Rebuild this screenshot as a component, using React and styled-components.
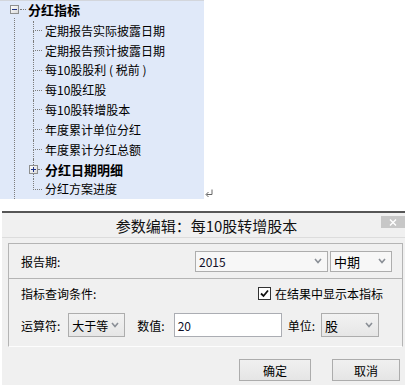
import React from 'react';
import styled, { createGlobalStyle } from 'styled-components';

const GlobalStyle = createGlobalStyle`
  html, body {
    margin: 0;
    padding: 0;
    background: #fff;
  }
  body {
    font-family: "Noto Sans CJK SC", "Noto Sans", sans-serif;
    font-size: 12px;
    color: #000;
  }
`;

const Page = styled.div`
  width: 405px;
  height: 387px;
  overflow: hidden;
`;

const TopArea = styled.div`
  display: flex;
  align-items: flex-end;
  height: 199px;
`;

const TreePanel = styled.div`
  width: 204px;
  height: 199px;
  box-sizing: border-box;
  background: #e0e9f9;
  border-top: 1px solid #d3d6dc;
  display: flex;
  flex-direction: column;
`;

const HeaderRow = styled.div`
  display: flex;
  align-items: center;
  height: 18px;
  padding-left: 10px;
`;

const HeaderDots = styled.div`
  width: 6px;
  border-top: 1px dotted #7c7c7c;
  margin: 0 2px 0 1px;
`;

const Label = styled.span`
  font-size: ${({ $bold }) => ($bold ? '13px' : '12px')};
  font-weight: ${({ $bold }) => ($bold ? 700 : 400)};
  white-space: pre;
  line-height: 1;
`;

const TreeBody = styled.div`
  flex: 1;
  margin-left: 14px;
  border-left: 1px dotted #7c7c7c;
  padding: 3px 0 0 18px;
`;

const ChildRow = styled.div`
  display: flex;
  align-items: center;
  height: 19.8px;
`;

const Elbow = styled.div`
  width: 12px;
  height: 100%;
  flex-shrink: 0;
  display: flex;
  flex-direction: column;
`;

const ElbowTop = styled.div`
  flex: 1;
  box-sizing: border-box;
  border-left: 1px dotted #7c7c7c;
  border-bottom: 1px dotted #7c7c7c;
  margin-right: 3px;
`;

const ElbowStem = styled.div`
  flex: 1;
  border-left: ${({ $hidden }) => ($hidden ? 'none' : '1px dotted #7c7c7c')};
`;

const ElbowMid = styled.div`
  display: flex;
  align-items: center;
  margin-left: -4px;
  height: 9px;
`;

const MidDots = styled.div`
  width: 4px;
  border-top: 1px dotted #7c7c7c;
`;

const ReturnMark = styled.div`
  margin: 0 0 2px 1px;
  display: flex;
`;

const Dialog = styled.div`
  margin: 12px 0 0 2px;
  width: 403px;
  height: 172px;
  background: #f0f0f0;
  border-top: 2px solid #565656;
  display: flex;
  flex-direction: column;
`;

const TitleBar = styled.div`
  display: flex;
  height: 24px;
  border-bottom: 1px solid #dcdcdc;
`;

const Title = styled.div`
  flex: 1;
  display: flex;
  align-items: center;
  justify-content: center;
  padding-left: 30px;
  font-size: 15px;
  color: #111;
`;

const CloseButton = styled.div`
  width: 24px;
  height: 12px;
  margin-top: 3px;
  background: #c7c7c7;
  display: flex;
  align-items: center;
  justify-content: center;
`;

const GroupBox = styled.div`
  margin: 5px 0 0 6px;
  width: 395px;
  box-sizing: border-box;
  border: 1px solid #b4b4b4;
  border-bottom-color: #fdfdfd;
`;

const PeriodSection = styled.div`
  height: 34px;
  display: flex;
  align-items: center;
  padding: 0 10px 0 12px;
  border-bottom: 1px solid #b4b4b4;
`;

const QuerySection = styled.div`
  padding: 0 0 9px 12px;
`;

const FormRow = styled.div`
  display: flex;
  align-items: center;
  height: ${({ $h }) => $h}px;
  margin-top: ${({ $mt }) => $mt || 0}px;
`;

const FieldLabel = styled.span`
  font-size: 12px;
  white-space: nowrap;
  margin-left: ${({ $ml }) => $ml || 0}px;
  flex: ${({ $grow }) => ($grow ? 1 : 'none')};
`;

const SelectBox = styled.div`
  width: ${({ $w }) => $w}px;
  height: ${({ $h }) => $h}px;
  box-sizing: border-box;
  margin-left: ${({ $ml }) => $ml || 0}px;
  border: 1px solid #adadad;
  background: ${({ $light }) => ($light ? '#f7f7f7' : 'linear-gradient(#f2f2f2, #e6e6e6)')};
  display: flex;
  align-items: center;
  padding: 0 5px 0 3px;
  font-size: ${({ $fs }) => $fs || 13}px;
`;

const SelectValue = styled.span`
  flex: 1;
  white-space: nowrap;
  color: ${({ $num }) => ($num ? '#101028' : '#000')};
`;

const NumberInput = styled.div`
  width: 108px;
  height: 24px;
  box-sizing: border-box;
  margin-left: 9px;
  border: 1px solid #abadb3;
  background: #fff;
  display: flex;
  align-items: center;
  padding-left: 3px;
  font-size: 12px;
  color: #101028;
`;

const CheckWrap = styled.label`
  display: flex;
  align-items: center;
  gap: 4px;
  margin-right: 19px;
  font-size: 12px;
`;

const CheckBox = styled.span`
  width: 13px;
  height: 13px;
  box-sizing: border-box;
  border: 1px solid #333;
  background: #fff;
  display: flex;
  align-items: center;
  justify-content: center;
`;

const ButtonRow = styled.div`
  display: flex;
  justify-content: flex-end;
  gap: 21px;
  padding: 12px 5px 0 0;
`;

const Button = styled.div`
  width: ${({ $w }) => $w}px;
  height: 22px;
  box-sizing: border-box;
  border: 1px solid #acacac;
  background: linear-gradient(#f0f0f0, #e5e5e5);
  display: flex;
  align-items: center;
  justify-content: center;
  font-size: 12px;
`;

const ExpandIcon = ({ open }) => (
  <svg width="9" height="9" viewBox="0 0 9 9" style={{ flexShrink: 0 }}>
    <defs>
      <linearGradient id={open ? 'gm' : 'gp'} x1="0" y1="0" x2="1" y2="1">
        <stop offset="0" stopColor="#ffffff" />
        <stop offset="1" stopColor="#d8d8d8" />
      </linearGradient>
    </defs>
    <rect x="0.5" y="0.5" width="8" height="8" fill={`url(#${open ? 'gm' : 'gp'})`} stroke="#8e8f8f" />
    <line x1="2" y1="4.5" x2="7" y2="4.5" stroke="#1e3287" />
    {!open && <line x1="4.5" y1="2" x2="4.5" y2="7" stroke="#1e3287" />}
  </svg>
);

const Chevron = () => (
  <svg width="8" height="6" viewBox="0 0 8 6">
    <polyline points="1,1 4,4.5 7,1" fill="none" stroke="#8a8f96" strokeWidth="1.6" />
  </svg>
);

const items = [
  { text: '定期报告实际披露日期' },
  { text: '定期报告预计披露日期' },
  { text: '每10股股利 ( 税前 )' },
  { text: '每10股红股' },
  { text: '每10股转增股本' },
  { text: '年度累计单位分红' },
  { text: '年度累计分红总额' },
  { text: '分红日期明细', folder: true },
  { text: '分红方案进度' },
];

const TreeItem = ({ item, last }) => (
  <ChildRow>
    {item.folder ? (
      <Elbow>
        <ElbowStem />
        <ElbowMid>
          <ExpandIcon />
          <MidDots />
        </ElbowMid>
        <ElbowStem />
      </Elbow>
    ) : (
      <Elbow>
        <ElbowTop />
        <ElbowStem $hidden={last} />
      </Elbow>
    )}
    <Label $bold={item.folder}>{item.text}</Label>
  </ChildRow>
);

const App = () => (
  <Page>
    <GlobalStyle />
    <TopArea>
      <TreePanel>
        <HeaderRow>
          <ExpandIcon open />
          <HeaderDots />
          <Label $bold>分红指标</Label>
        </HeaderRow>
        <TreeBody>
          {items.map((item, i) => (
            <TreeItem key={item.text} item={item} last={i === items.length - 1} />
          ))}
        </TreeBody>
      </TreePanel>
      <ReturnMark>
        <svg width="8" height="8" viewBox="0 0 8 8">
          <path d="M7 0.5 V5.5 H1.5" fill="none" stroke="#666" />
          <path d="M3.5 3 L1 5.5 L3.5 8" fill="none" stroke="#666" />
        </svg>
      </ReturnMark>
    </TopArea>

    <Dialog>
      <TitleBar>
        <Title>参数编辑：每10股转增股本</Title>
        <CloseButton>
          <svg width="8" height="7" viewBox="0 0 8 7">
            <path d="M1 0.5 L7 6.5 M7 0.5 L1 6.5" stroke="#fff" strokeWidth="1.4" />
          </svg>
        </CloseButton>
      </TitleBar>

      <GroupBox>
        <PeriodSection>
          <FieldLabel $grow>报告期:</FieldLabel>
          <SelectBox $w={133} $h={21} $light $fs={12}>
            <SelectValue $num>2015</SelectValue>
            <Chevron />
          </SelectBox>
          <SelectBox $w={62} $h={21} $ml={2} $light>
            <SelectValue>中期</SelectValue>
            <Chevron />
          </SelectBox>
        </PeriodSection>
        <QuerySection>
          <FormRow $h={28}>
            <FieldLabel $grow>指标查询条件:</FieldLabel>
            <CheckWrap>
              <CheckBox>
                <svg width="9" height="9" viewBox="0 0 9 9">
                  <path d="M1 4.5 L3.5 7 L8 1.5" fill="none" stroke="#111" strokeWidth="1.8" />
                </svg>
              </CheckBox>
              在结果中显示本指标
            </CheckWrap>
          </FormRow>
          <FormRow $h={24} $mt={6}>
            <FieldLabel>运算符:</FieldLabel>
            <SelectBox $w={57} $h={24} $ml={8} $fs={12}>
              <SelectValue>大于等</SelectValue>
              <Chevron />
            </SelectBox>
            <FieldLabel $ml={12}>数值:</FieldLabel>
            <NumberInput>20</NumberInput>
            <FieldLabel $ml={6}>单位:</FieldLabel>
            <SelectBox $w={58} $h={24} $ml={6}>
              <SelectValue>股</SelectValue>
              <Chevron />
            </SelectBox>
          </FormRow>
        </QuerySection>
      </GroupBox>

      <ButtonRow>
        <Button $w={72}>确定</Button>
        <Button $w={68}>取消</Button>
      </ButtonRow>
    </Dialog>
  </Page>
);

export default App;
